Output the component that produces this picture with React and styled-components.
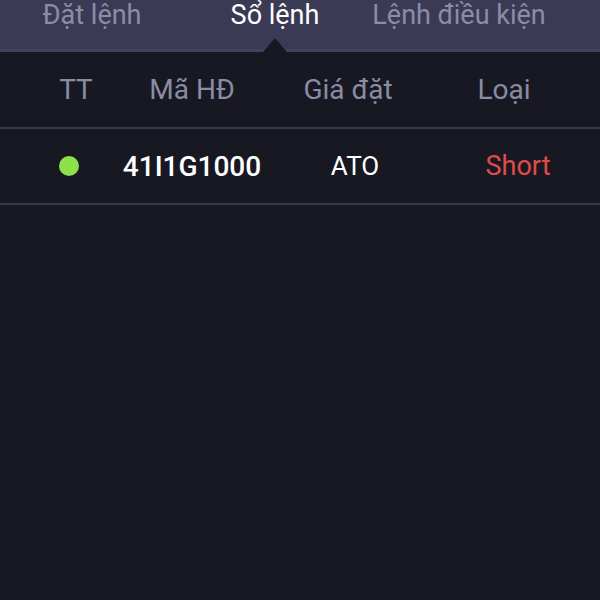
import React from "react";
import styled, { createGlobalStyle } from "styled-components";

const GlobalStyle = createGlobalStyle`
  html, body {
    margin: 0;
    padding: 0;
    background: #181823;
    font-family: Roboto, "Noto Sans", sans-serif;
  }
`;

const Page = styled.div`
  width: 600px;
  height: 600px;
  background: #181823;
  overflow: hidden;
`;

const TabBar = styled.div`
  position: relative;
  height: 52px;
  background: #3b3a54;
  border-bottom: 3px solid #43425d;
  box-sizing: border-box;
  display: flex;
`;

const Tab = styled.div`
  width: ${({ $w }) => $w}px;
  flex-shrink: 0;
  display: flex;
  justify-content: center;
  font-size: 27px;
  line-height: 30px;
  color: ${({ $active }) => ($active ? "#ffffff" : "#8a8ca8")};
  white-space: nowrap;
  position: relative;
`;

const Pointer = styled.span`
  position: absolute;
  left: 50%;
  bottom: -3px;
  margin-left: -12px;
  width: 0;
  height: 0;
  border-left: 12px solid transparent;
  border-right: 12px solid transparent;
  border-bottom: 14px solid #181823;
`;

const Row = styled.div`
  display: grid;
  grid-template-columns: ${({ $cols }) => $cols};
  padding-left: 20px;
  height: ${({ $h }) => $h}px;
  align-items: center;
  border-bottom: 2px solid #393946;
`;

const HeadCell = styled.div`
  justify-self: center;
  white-space: nowrap;
  font-size: 28px;
  color: #8a8ca3;
`;

const Cell = styled.div`
  justify-self: center;
  white-space: nowrap;
  font-size: ${({ $size }) => $size || 27}px;
  font-weight: ${({ $bold }) => ($bold ? 500 : 400)};
  color: ${({ $color }) => $color || "#ffffff"};
`;

const Dot = styled.span`
  display: block;
  width: 20px;
  height: 20px;
  border-radius: 50%;
  background: #8de24c;
`;

export default function App() {
  return (
    <Page>
      <GlobalStyle />
      <TabBar>
        <Tab $w={184}>Đặt lệnh</Tab>
        <Tab $w={182} $active>
          Sổ lệnh
          <Pointer />
        </Tab>
        <Tab $w={186}>Lệnh điều kiện</Tab>
      </TabBar>
      <Row $cols="112px 120px 192px 120px" $h={75}>
        <HeadCell>TT</HeadCell>
        <HeadCell>Mã HĐ</HeadCell>
        <HeadCell>Giá đặt</HeadCell>
        <HeadCell>Loại</HeadCell>
      </Row>
      <Row $cols="98px 148px 178px 148px" $h={74}>
        <Cell>
          <Dot />
        </Cell>
        <Cell $bold $size={28}>41I1G1000</Cell>
        <Cell $size={26}>ATO</Cell>
        <Cell $color="#e24b4b">Short</Cell>
      </Row>
    </Page>
  );
}
